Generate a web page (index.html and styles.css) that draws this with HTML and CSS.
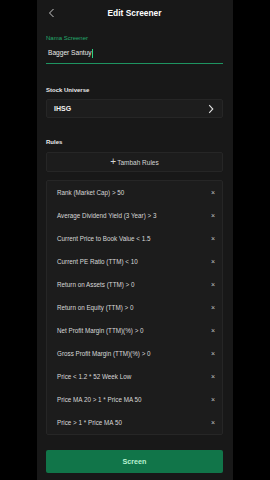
FILE: index.html
```html
<!DOCTYPE html>
<html>
<head>
<meta charset="utf-8">
<link rel="stylesheet" href="styles.css">
</head>
<body>
<div class="app">
  <div class="header">
    <svg class="back" width="7" height="10" viewBox="0 0 7 10"><path d="M5.5 1 L1.5 5 L5.5 9" fill="none" stroke="#c8c8c8" stroke-width="1"/></svg>
    <div class="title">Edit Screener</div>
  </div>
  <div class="label green">Nama Screener</div>
  <div class="input"><span>Bagger Santuy</span><span class="cursor"></span></div>
  <div class="label bold sec1">Stock Universe</div>
  <div class="select">
    <span>IHSG</span>
    <svg width="6" height="10" viewBox="0 0 6 10"><path d="M1.2 1.2 L4.8 5 L1.2 8.8" fill="none" stroke="#e0e0e0" stroke-width="1.1"/></svg>
  </div>
  <div class="label bold sec2">Rules</div>
  <div class="add"><span class="plus">+</span> Tambah Rules</div>
  <div class="rules">
    <div class="rule"><span>Rank (Market Cap) &gt; 50</span><span class="x">×</span></div>
    <div class="rule"><span>Average Dividend Yield (3 Year) &gt; 3</span><span class="x">×</span></div>
    <div class="rule"><span>Current Price to Book Value &lt; 1.5</span><span class="x">×</span></div>
    <div class="rule"><span>Current PE Ratio (TTM) &lt; 10</span><span class="x">×</span></div>
    <div class="rule"><span>Return on Assets (TTM) &gt; 0</span><span class="x">×</span></div>
    <div class="rule"><span>Return on Equity (TTM) &gt; 0</span><span class="x">×</span></div>
    <div class="rule"><span>Net Profit Margin (TTM)(%) &gt; 0</span><span class="x">×</span></div>
    <div class="rule"><span>Gross Profit Margin (TTM)(%) &gt; 0</span><span class="x">×</span></div>
    <div class="rule"><span>Price &lt; 1.2 * 52 Week Low</span><span class="x">×</span></div>
    <div class="rule"><span>Price MA 20 &gt; 1 * Price MA 50</span><span class="x">×</span></div>
    <div class="rule"><span>Price &gt; 1 * Price MA 50</span><span class="x">×</span></div>
  </div>
  <div class="button">Screen</div>
</div>
</body>
</html>
```
FILE: styles.css
```css
* { box-sizing: border-box; }
html, body { margin: 0; padding: 0; background: #000; }
body { font-family: "Liberation Sans", Arial, sans-serif; color: #d4d4d4; }
.app {
  margin-left: 37px;
  width: 196px;
  height: 480px;
  background: #181818;
  padding: 0 10px 0 9px;
  display: flex;
  flex-direction: column;
}
.header {
  height: 26px;
  position: relative;
  display: flex;
  align-items: center;
  justify-content: center;
}
.back { position: absolute; left: 2px; top: 8px; }
.title { color: #fff; font-weight: bold; font-size: 8.4px; }
.label { font-size: 6px; line-height: 8px; }
.green { color: #23a86c; margin-top: 8px; }
.bold { font-weight: bold; color: #ececec; }
.sec1 { margin-top: 22px; }
.sec2 { margin-top: 20px; }
.input {
  margin-top: 6px;
  height: 16px;
  padding: 0 0 0 2px;
  border-bottom: 1px solid #1e9461;
  font-size: 6.6px;
  line-height: 10px;
  color: #e8e8e8;
  display: flex;
  align-items: flex-start;
}
.cursor { display: inline-block; width: 1px; height: 9px; background: #2bd083; margin-top: 1px; }
.select {
  margin-top: 5px;
  height: 19px;
  background: #1d1d1d;
  border: 1px solid #262626;
  border-radius: 2px;
  display: flex;
  align-items: center;
  justify-content: space-between;
  padding: 0 8px 0 7px;
  font-weight: bold;
  font-size: 7px;
  color: #f0f0f0;
}
.add {
  margin-top: 6px;
  height: 20px;
  background: #1c1c1c;
  border: 1px solid #262626;
  border-radius: 2px;
  display: flex;
  align-items: center;
  justify-content: center;
  font-size: 6.5px;
  color: #d4d4d4;
}
.plus { font-size: 10px; line-height: 8px; margin-right: 1px; }
.rules {
  margin-top: 8px;
  height: 255px;
  background: #1c1c1c;
  border: 1px solid #262626;
  border-radius: 2px;
  display: flex;
  flex-direction: column;
}
.rule {
  height: 23.1px;
  display: flex;
  align-items: center;
  justify-content: space-between;
  padding: 0 7px 0 10px;
  font-size: 6.3px;
  color: #d8d8d8;
}
.x { font-size: 7px; color: #c0c0c0; }
.button {
  margin-top: 15px;
  height: 23px;
  background: #117549;
  border-radius: 2px;
  display: flex;
  align-items: center;
  justify-content: center;
  font-weight: bold;
  font-size: 7.2px;
  color: #b8f2d2;
}
```
